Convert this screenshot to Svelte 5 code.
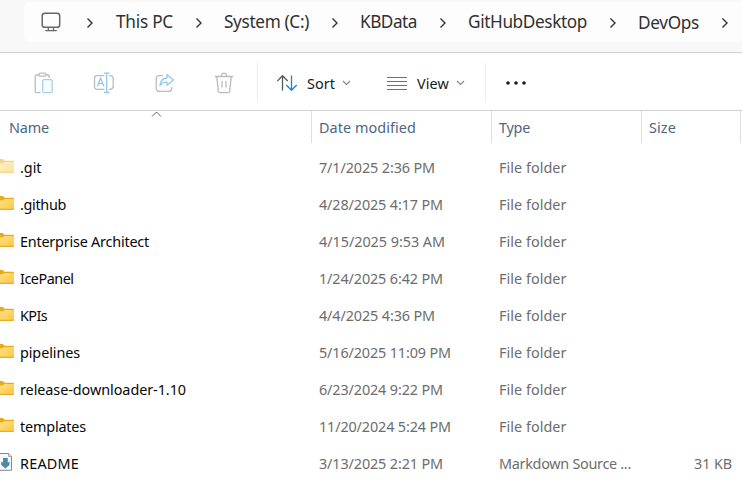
<script>
  const crumbs = [
    { label: 'This PC', width: 57, gap: 51 },
    { label: 'System (C:)', width: 85, gap: 51 },
    { label: 'KBData', width: 57, gap: 51 },
    { label: 'GitHubDesktop', width: 119, gap: 51 },
    { label: 'DevOps', width: 61, gap: 52, low: true }
  ];

  const rows = [
    { name: '.git', w: 21.5, date: '7/1/2025 2:36 PM', dw: 116, kind: 'hidden' },
    { name: '.github', w: 46, date: '4/28/2025 4:17 PM', dw: 124, kind: 'folder' },
    { name: 'Enterprise Architect', w: 129, date: '4/15/2025 9:53 AM', dw: 126, kind: 'folder' },
    { name: 'IcePanel', w: 53.5, date: '1/24/2025 6:42 PM', dw: 124, kind: 'folder' },
    { name: 'KPIs', w: 27.2, date: '4/4/2025 4:36 PM', dw: 116, kind: 'folder' },
    { name: 'pipelines', w: 60, date: '5/16/2025 11:09 PM', dw: 132, kind: 'folder' },
    { name: 'release-downloader-1.10', w: 166, date: '6/23/2024 9:22 PM', dw: 124, kind: 'folder' },
    { name: 'templates', w: 66, date: '11/20/2024 5:24 PM', dw: 132, kind: 'folder' },
    { name: 'README', w: 59, date: '3/13/2025 2:21 PM', dw: 124, kind: 'file', size: '31 KB' }
  ];

  // Tracks a label so that it occupies the given width.
  function fit(node, width) {
    const natural = node.getBoundingClientRect().width;
    const count = node.textContent.length;
    node.style.letterSpacing = `${(width - natural) / count}px`;
  }
</script>

{#snippet chevron(gap)}
  <span class="chev" style:width="{gap}px">
    <svg width="8" height="12" viewBox="0 0 8 12"><path d="M1.5 1.5 6 6 1.5 10.5" fill="none" stroke="#333" stroke-width="1.4" /></svg>
  </span>
{/snippet}

{#snippet down()}
  <svg class="down" width="9" height="6" viewBox="0 0 9 6"><path d="M1 1 4.5 4.5 8 1" fill="none" stroke="#858585" stroke-width="1.1" /></svg>
{/snippet}

<div class="window">
  <div class="top">
    <div class="address">
      <svg class="pc" width="20" height="20" viewBox="0 0 20 20" fill="none" stroke="#666">
        <rect x="1.2" y="1.3" width="17.5" height="14" rx="2.6" stroke-width="1.5" />
        <path d="M7.3 15.5v3M12.5 15.5v3M4.3 18.6h11.5" stroke-width="1.3" />
      </svg>
      {@render chevron(52)}
      {#each crumbs as c}
        <span class="crumb" class:low={c.low} style:width="{c.width}px"><span use:fit={c.width}>{c.label}</span></span>
        {@render chevron(c.gap)}
      {/each}
    </div>
  </div>

  <div class="tools">
    <div class="icons">
      <svg width="20" height="22" viewBox="0 0 20 22" fill="none" stroke-width="1.3">
        <path d="M5 3H2.7Q1.2 3 1.2 4.5v14.7q0 1.5 1.5 1.5H6.5M11.5 3h2.3q1.5 0 1.5 1.5V6" stroke="#bcbcbc" />
        <rect x="5" y="1.2" width="7" height="3" rx="1.3" stroke="#bcbcbc" />
        <rect x="8.7" y="7.7" width="9.5" height="13" rx="1.5" stroke="#a3cff1" fill="#fafdff" />
      </svg>
      <svg width="22" height="22" viewBox="0 0 22 22" fill="none" stroke-width="1.3">
        <path d="M11.5 3.7H4Q1.5 3.7 1.5 6.2v8.6q0 2.5 2.5 2.5h7.5M16 3.7h1.2q3 0 3 3v7.6q0 3-3 3H16" stroke="#bcbcbc" />
        <path d="M4.2 14.5 7.6 6.2 11 14.5M5.4 11.7h4.4M13.7 1.2v19.3M11 1.2h5.5M11 20.5h5.5" stroke="#94c8f0" />
      </svg>
      <svg width="20" height="22" viewBox="0 0 20 22" fill="none" stroke-width="1.3" stroke-linejoin="round">
        <path d="M8 3.7H4.2q-3 0-3 3v9.6q0 3 3 3h9.6q3 0 3-3V15" stroke="#bcbcbc" />
        <path d="M12 2.6 18.4 8 12 13.2v-3Q7.5 9.8 5 13.5 5.4 6.5 12 6Z" stroke="#94c8f0" />
      </svg>
      <svg width="20" height="22" viewBox="0 0 20 22" fill="none" stroke="#bcbcbc" stroke-width="1.3">
        <path d="M.9 4.5H19M7.3 4.3Q7.3 1.2 10 1.2t2.7 3.1M2.8 4.7l1.5 14.4q.2 1.5 1.7 1.5h8q1.5 0 1.7-1.5L17.2 4.7M8 9v6.5M12 9v6.5" />
      </svg>
    </div>
    <div class="rule"></div>
    <div class="sort">
      <svg width="21" height="18" viewBox="0 0 21 18" fill="none" stroke-width="1.3">
        <path d="M5.5 16.5V2M.3 7 5.5 1.7 10.7 7" stroke="#595959" />
        <path d="M14.5 1.5V16M9.3 11 14.5 16.3 19.7 11" stroke="#1683d8" />
      </svg>
      <span class="label"><span use:fit={28}>Sort</span></span>
      {@render down()}
    </div>
    <div class="view">
      <svg width="20" height="14" viewBox="0 0 20 14"><path d="M0 1.5h20M0 5.5h20M0 9.5h20M0 13.5h20" stroke="#707070" stroke-width="1" /></svg>
      <span class="label v"><span use:fit={32}>View</span></span>
      {@render down()}
    </div>
    <div class="rule"></div>
    <svg class="more" width="20" height="4" viewBox="0 0 20 4" fill="#1c1c1c"><circle cx="2" cy="2" r="1.8" /><circle cx="10" cy="2" r="1.8" /><circle cx="18" cy="2" r="1.8" /></svg>
  </div>

  <div class="head">
    <div class="cell hname"><span use:fit={40}>Name</span>
      <svg class="asc" width="11" height="7" viewBox="0 0 11 7"><path d="M1 5.5 5.5 1 10 5.5" fill="none" stroke="#666" stroke-width="1" /></svg>
    </div>
    <div class="cell hdate"><span use:fit={97}>Date modified</span></div>
    <div class="cell htype"><span use:fit={31}>Type</span></div>
    <div class="cell hsize"><span use:fit={27}>Size</span></div>
  </div>

  <div class="list">
    {#each rows as r}
      <div class="row">
        <div class="icon">
          {#if r.kind === 'file'}
            <svg width="14" height="20" viewBox="0 0 14 20">
              <path d="M-2 1.5H8.8L11.5 4.2V18.3H-2Z" fill="#fafafa" stroke="#858585" />
              <path d="M8.5 1.5v3h3" fill="#ddd" stroke="#999" stroke-width=".8" />
              <path d="M3 6h4.8v4.5l1.7-1V13L5.4 16.4 1.2 13V9.5l1.8 1Z" fill="#488baf" />
            </svg>
          {:else}
            <svg class:faded={r.kind === 'hidden'} width="14" height="16" viewBox="0 0 14 16">
              <defs><linearGradient id="gold" x1="0" y1="0" x2="1" y2="1"><stop offset="0" stop-color="#ffdf83" /><stop offset="1" stop-color="#ffc843" /></linearGradient></defs>
              <path d="M0 1H2.3Q3.2 1 3.8 2L4.5 2.8H13Q14 2.8 14 3.8V7H0Z" fill="#eba914" />
              <path d="M0 5.2H3L4.3 4H13.3Q14 4 14 4.7V14H0Z" fill="url(#gold)" />
              <path d="M0 13.8h13q1 0 1-1v1.2q0 1-1 1H0Z" fill="#e8ad2c" />
            </svg>
          {/if}
        </div>
        <div class="name"><span use:fit={r.w}>{r.name}</span></div>
        <div class="date"><span use:fit={r.dw}>{r.date}</span></div>
        <div class="type">
          {#if r.kind === 'file'}<span use:fit={132}>Markdown Source ...</span>{:else}<span use:fit={67.5}>File folder</span>{/if}
        </div>
        <div class="size">{#if r.size}<span use:fit={38}>{r.size}</span>{/if}</div>
      </div>
    {/each}
  </div>
</div>

<style>
  .window { width: 742px; height: 483px; overflow: hidden; background: #fff; font: 14.4px/20px "Noto Sans", "Open Sans", sans-serif; color: #191919; }
  .window span { white-space: nowrap; }
  svg { display: block; flex: none; }
  .top { box-sizing: border-box; height: 53px; padding: 2px 0 0 24px; background: #f8f8f8; border-bottom: 1px solid #d0d0d0; }
  .address { display: flex; align-items: center; height: 40px; padding-left: 17px; background: #fdfdfd; border-radius: 6px 0 0 6px; overflow: hidden; }
  .pc { margin-right: 3px; }
  .chev { display: flex; flex: none; justify-content: center; padding-top: 1px; }
  .crumb { flex: none; font-size: 17.2px; line-height: 24px; color: #303030; }
  .crumb.low { padding-top: 2px; }
  .tools { box-sizing: border-box; display: flex; align-items: center; height: 58px; border-bottom: 1px solid #d2d2d2; padding-top: 2px; }
  .icons { display: flex; align-items: center; justify-content: space-between; width: 200px; margin: 0 23px 0 34px; }
  .rule { width: 1px; height: 39px; background: #ececec; flex: none; }
  .sort { display: flex; align-items: center; width: 110px; padding-left: 19px; }
  .view { display: flex; align-items: center; width: 98px; }
  .label { width: 29px; margin: 0 6px 0 9px; padding-top: 2px; }
  .label.v { width: 33px; margin-left: 10px; }
  .down { margin-top: 1px; }
  .more { margin: 1px 0 0 20px; }
  .head { display: flex; height: 32px; color: #4d6684; }
  .cell { box-sizing: border-box; flex: none; padding: 7px 0 0 7px; border-right: 1px solid #dedede; }
  .hname { position: relative; width: 312px; padding-left: 9px; }
  .hdate { width: 180px; }
  .htype { width: 150px; }
  .hsize { width: 99px; }
  .asc { position: absolute; left: 151px; top: 0; }
  .list { padding-top: 6px; }
  .row { display: flex; align-items: center; height: 37px; color: #6d6d6d; }
  .icon { width: 20px; flex: none; padding-bottom: 3px; }
  .faded { opacity: .5; }
  .name { width: 299px; color: #080808; }
  .date { width: 180px; }
  .type { width: 150px; }
  .size { width: 83px; text-align: right; }
</style>
